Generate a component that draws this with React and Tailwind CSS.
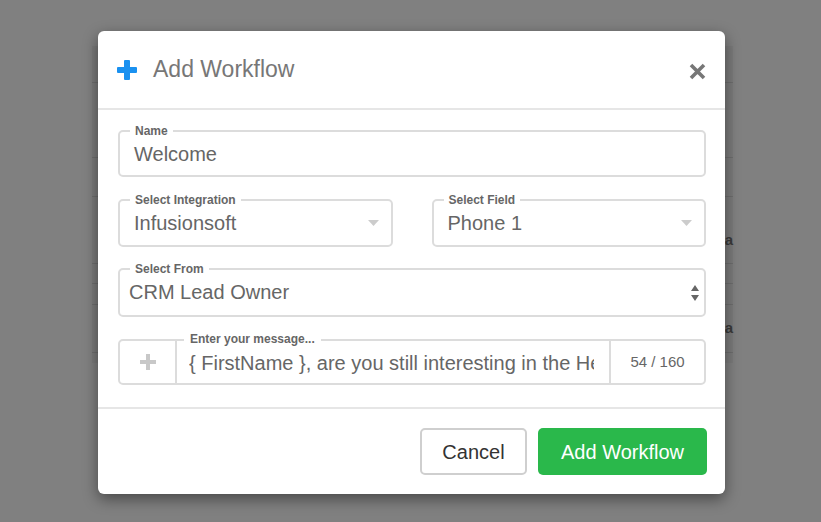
import React from "react";

const font = { fontFamily: '"Liberation Sans", Arial, sans-serif' };

const Caret = () => (
  <svg width="11" height="6" viewBox="0 0 11 6" className="absolute right-[12px] top-1/2 -translate-y-1/2">
    <path d="M0 0 L11 0 L5.5 6 Z" fill="#cccccc" />
  </svg>
);

const Field = ({ label, value, height, children, padLeft = "pl-[14px]", shift = "" }) => (
  <div
    className={`relative flex items-center border-2 border-[#dcdcdc] rounded-[5px] ${height} ${padLeft} ${shift}`}
  >
    <span className="absolute left-[10px] -top-[9px] bg-white px-[5px] text-[12px] font-bold leading-[16px] text-[#666]">
      {label}
    </span>
    <span className="text-[20px] leading-[23px] text-[#666]">{value}</span>
    {children}
  </div>
);

const BackdropPage = () => (
  <div className="pt-[46px] pl-[92px]">
    <div className="w-[641px] h-[317px] bg-[#7b7b7b] flex flex-col">
      <div className="h-[37px] border-b border-[#6e6e6e]" />
      <div className="h-[75px] border-b border-[#6e6e6e]" />
      <div className="h-[39px] border-b border-[#6e6e6e]" />
      <div className="h-[67px] border-b border-[#6e6e6e] flex items-end justify-end pb-[12px]">
        <span className="text-[15px] font-bold text-[#3a3a3a]">Pausa</span>
      </div>
      <div className="h-[20px] border-b border-[#6e6e6e]" />
      <div className="h-[21px] border-b border-[#6e6e6e]" />
      <div className="h-[48px] border-b border-[#6e6e6e] flex items-center justify-end">
        <span className="text-[15px] font-bold text-[#3a3a3a]">Pausa</span>
      </div>
    </div>
  </div>
);

export default function App() {
  return (
    <div className="relative w-full h-[522px] bg-[#808080] overflow-hidden" style={font}>
      <BackdropPage />

      {/* modal */}
      <div className="absolute inset-0 pt-[31px] pl-[98px]">
        <div className="w-[627px] h-[463px] bg-white rounded-[6px] shadow-[0_5px_15px_rgba(0,0,0,0.45)] flex flex-col">
          <header className="h-[79px] flex items-center pl-[19px] pr-[19px] border-b-2 border-[#e6e6e6]">
            <svg width="20" height="20" viewBox="0 0 20 20">
              <rect x="7" y="0" width="6" height="20" rx="1" fill="#1a91f0" />
              <rect x="0" y="7" width="20" height="6" rx="1" fill="#1a91f0" />
            </svg>
            <h2 className="ml-[16px] text-[23px] text-[#777] font-normal">Add Workflow</h2>
            <button className="ml-auto mt-[4px]">
              <svg width="17" height="17" viewBox="0 0 17 17">
                <path d="M2 2 L15 15 M15 2 L2 15" stroke="#777" strokeWidth="3.6" />
              </svg>
            </button>
          </header>

          <section className="pt-[20px] pl-[20px] pr-[19px] h-[299px] border-b-2 border-[#e6e6e6] flex flex-col">
            <Field label="Name" value="Welcome" height="h-[47px]" shift="pt-[2px]" />

            <div className="mt-[22px] flex gap-[39px]">
              <div className="flex-1">
                <Field label="Select Integration" value="Infusionsoft" height="h-[48px]">
                  <Caret />
                </Field>
              </div>
              <div className="flex-1">
                <Field label="Select Field" value="Phone 1" height="h-[48px]">
                  <Caret />
                </Field>
              </div>
            </div>

            <div className="mt-[21px]">
              <Field label="Select From" value="CRM Lead Owner" height="h-[49px]" padLeft="pl-[9px]">
                <svg width="8" height="16" viewBox="0 0 8 16" className="absolute right-[5px] top-1/2 -translate-y-1/2">
                  <path d="M0 6 L4 0 L8 6 Z M0 10 L8 10 L4 16 Z" fill="#666" />
                </svg>
              </Field>
            </div>

            <div className="mt-[22px] h-[46px] flex border-2 border-[#dcdcdc] rounded-[5px]">
              <button className="w-[57px] shrink-0 flex items-center justify-center border-r-2 border-[#dcdcdc]">
                <svg width="16" height="16" viewBox="0 0 16 16">
                  <rect x="6" y="0" width="4" height="16" fill="#c8c8c8" />
                  <rect x="0" y="6" width="16" height="4" fill="#c8c8c8" />
                </svg>
              </button>
              <div className="relative flex-1 min-w-0 flex items-center pl-[12px] pt-[2px]">
                <span className="absolute left-[7px] -top-[10px] bg-white px-[6px] text-[12px] font-bold leading-[16px] text-[#666]">
                  Enter your message...
                </span>
                <div className="min-w-0 mr-[15px] overflow-hidden whitespace-nowrap text-[20px] leading-[23px] text-[#666]">
                  {"{ FirstName }, are you still interesting in the Health Insurance plan?"}
                </div>
              </div>
              <div className="w-[95px] shrink-0 flex items-center justify-center border-l-2 border-[#dcdcdc] text-[15px] text-[#666]">
                54 / 160
              </div>
            </div>
          </section>

          <footer className="flex justify-end gap-[11px] pt-[19px] pr-[18px]">
            <button className="w-[107px] h-[47px] border-2 border-[#cfcfcf] rounded-[5px] text-[20px] text-[#333]">
              Cancel
            </button>
            <button className="w-[169px] h-[47px] bg-[#2ab84b] rounded-[5px] text-[20px] text-white">
              Add Workflow
            </button>
          </footer>
        </div>
      </div>
    </div>
  );
}
